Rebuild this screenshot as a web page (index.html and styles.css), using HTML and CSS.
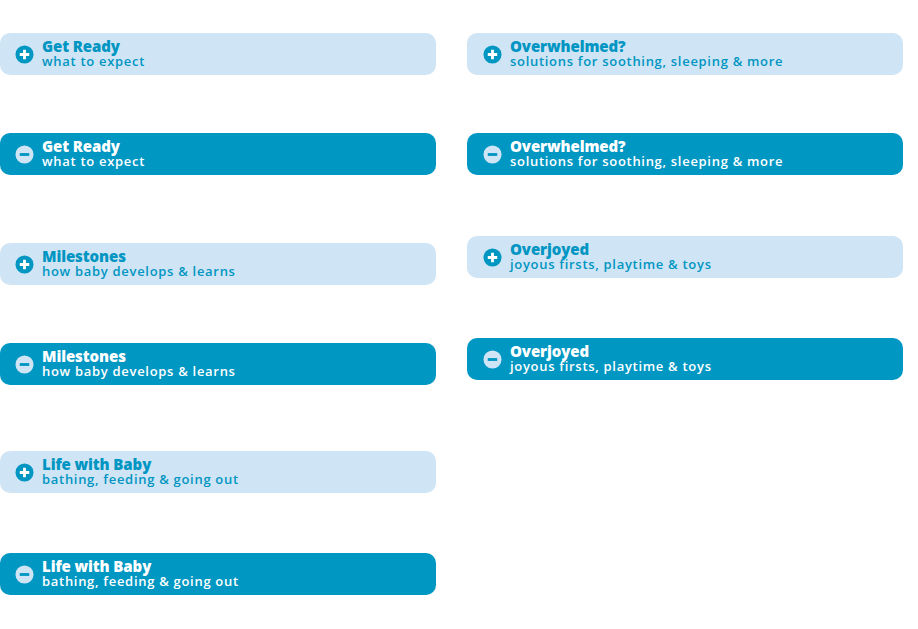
FILE: index.html
```html
<!DOCTYPE html>
<html>
<head>
<meta charset="utf-8">
<link rel="stylesheet" href="styles.css">
</head>
<body>
<div class="page">
  <div class="col col-left">
    <div class="btn closed"><svg class="ic" viewBox="0 0 20 20"><circle cx="10" cy="10" r="9.5"/><path d="M5 10h10M10 5v10"/></svg><div class="txt"><div class="t">Get Ready</div><div class="s">what to expect</div></div></div>
    <div class="btn open"><svg class="ic" viewBox="0 0 20 20"><circle cx="10" cy="10" r="9.5"/><path d="M5 10h10"/></svg><div class="txt"><div class="t">Get Ready</div><div class="s">what to expect</div></div></div>
    <div class="btn closed"><svg class="ic" viewBox="0 0 20 20"><circle cx="10" cy="10" r="9.5"/><path d="M5 10h10M10 5v10"/></svg><div class="txt"><div class="t">Milestones</div><div class="s">how baby develops &amp; learns</div></div></div>
    <div class="btn open"><svg class="ic" viewBox="0 0 20 20"><circle cx="10" cy="10" r="9.5"/><path d="M5 10h10"/></svg><div class="txt"><div class="t">Milestones</div><div class="s">how baby develops &amp; learns</div></div></div>
    <div class="btn closed"><svg class="ic" viewBox="0 0 20 20"><circle cx="10" cy="10" r="9.5"/><path d="M5 10h10M10 5v10"/></svg><div class="txt"><div class="t">Life with Baby</div><div class="s">bathing, feeding &amp; going out</div></div></div>
    <div class="btn open"><svg class="ic" viewBox="0 0 20 20"><circle cx="10" cy="10" r="9.5"/><path d="M5 10h10"/></svg><div class="txt"><div class="t">Life with Baby</div><div class="s">bathing, feeding &amp; going out</div></div></div>
  </div>
  <div class="col col-right">
    <div class="btn closed"><svg class="ic" viewBox="0 0 20 20"><circle cx="10" cy="10" r="9.5"/><path d="M5 10h10M10 5v10"/></svg><div class="txt"><div class="t">Overwhelmed?</div><div class="s">solutions for soothing, sleeping &amp; more</div></div></div>
    <div class="btn open"><svg class="ic" viewBox="0 0 20 20"><circle cx="10" cy="10" r="9.5"/><path d="M5 10h10"/></svg><div class="txt"><div class="t">Overwhelmed?</div><div class="s">solutions for soothing, sleeping &amp; more</div></div></div>
    <div class="btn closed"><svg class="ic" viewBox="0 0 20 20"><circle cx="10" cy="10" r="9.5"/><path d="M5 10h10M10 5v10"/></svg><div class="txt"><div class="t">Overjoyed</div><div class="s">joyous firsts, playtime &amp; toys</div></div></div>
    <div class="btn open"><svg class="ic" viewBox="0 0 20 20"><circle cx="10" cy="10" r="9.5"/><path d="M5 10h10"/></svg><div class="txt"><div class="t">Overjoyed</div><div class="s">joyous firsts, playtime &amp; toys</div></div></div>
  </div>
</div>
</body>
</html>
```
FILE: styles.css
```css
html, body { margin: 0; padding: 0; background: #fff; }
.page {
  display: flex;
  gap: 31px;
  padding-top: 33px;
  font-family: "Open Sans", "Liberation Sans", sans-serif;
}
.col { display: flex; flex-direction: column; width: 436px; }
.btn {
  height: 42px;
  border-radius: 10px;
  display: flex;
  align-items: center;
  box-sizing: border-box;
  padding-left: 15px;
}
.col-right .btn { padding-left: 16px; }
.closed { background: #cfe5f5; color: #0095c2; }
.open { background: #0097c3; color: #fff; }
.ic { width: 19px; height: 19px; flex: none; margin-right: 8px; }
.closed .ic circle { fill: #0096c2; }
.closed .ic path { stroke: #fff; }
.open .ic circle { fill: #cfe5f5; }
.open .ic path { stroke: #0096c2; }
.ic path { stroke-width: 3; fill: none; }
.txt { display: flex; flex-direction: column; }
.t { font-weight: 800; font-size: 15px; line-height: 15px; letter-spacing: -0.1px; }
.s { font-size: 13px; line-height: 15px; font-weight: 600; letter-spacing: 0.7px; }

.col-left .btn:nth-child(2) { margin-top: 58px; }
.col-left .btn:nth-child(3) { margin-top: 68px; }
.col-left .btn:nth-child(4) { margin-top: 58px; }
.col-left .btn:nth-child(5) { margin-top: 66px; }
.col-left .btn:nth-child(6) { margin-top: 60px; }
.col-right .btn:nth-child(2) { margin-top: 58px; }
.col-right .btn:nth-child(3) { margin-top: 61px; }
.col-right .btn:nth-child(4) { margin-top: 60px; }
```
